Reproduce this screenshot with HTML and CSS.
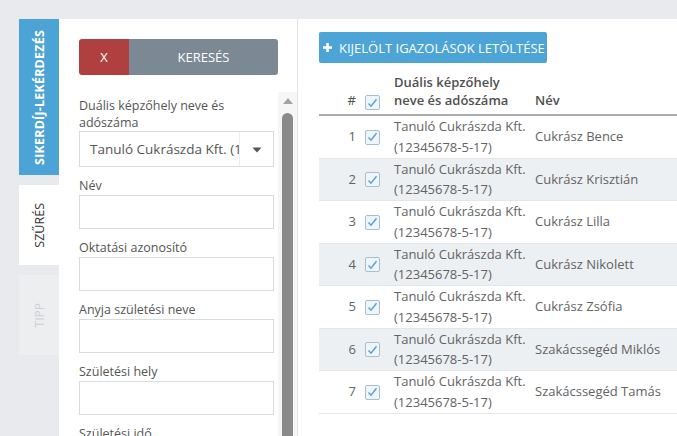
FILE: index.html
```html
<!DOCTYPE html>
<html lang="hu">
<head>
<meta charset="utf-8">
<title>Sikerdíj-lekérdezés</title>
<link rel="stylesheet" href="styles.css">
</head>
<body>
<div class="app">
  <nav class="tabs">
    <div class="tab tab-blue"><span>SIKERDÍJ-LEKÉRDEZÉS</span></div>
    <div class="tab tab-white"><span>SZŰRÉS</span></div>
    <div class="tab tab-gray"><span>TIPP</span></div>
  </nav>

  <aside class="filter">
    <div class="btn-group">
      <button class="btn-x">X</button>
      <button class="btn-search">KERESÉS</button>
    </div>
    <div class="scroll">
      <div class="scroll-content">
        <div class="field">
          <label class="label">Duális képzőhely neve és adószáma</label>
          <div class="select">
            <span class="select-text">Tanuló Cukrászda Kft. (12345678-5-17)</span>
            <span class="select-caret"><svg width="10" height="6" viewBox="0 0 10 6"><path d="M0.5 0.5H9.5L5 5.5Z" fill="#555"/></svg></span>
          </div>
        </div>
        <div class="field">
          <label class="label">Név</label>
          <div class="input"></div>
        </div>
        <div class="field">
          <label class="label">Oktatási azonosító</label>
          <div class="input"></div>
        </div>
        <div class="field">
          <label class="label">Anyja születési neve</label>
          <div class="input"></div>
        </div>
        <div class="field">
          <label class="label">Születési hely</label>
          <div class="input"></div>
        </div>
        <div class="field">
          <label class="label">Születési idő</label>
          <div class="input"></div>
        </div>
      </div>
      <div class="scrollbar">
        <div class="sb-arrow"></div>
        <div class="sb-thumb"></div>
      </div>
    </div>
  </aside>

  <main class="main">
    <button class="btn-download"><svg class="plus" width="9" height="9" viewBox="0 0 9 9"><path d="M3.2 0H5.8V3.2H9V5.8H5.8V9H3.2V5.8H0V3.2H3.2Z" fill="#fff"/></svg>KIJELÖLT IGAZOLÁSOK LETÖLTÉSE</button>
    <table class="grid">
      <thead>
        <tr>
          <th class="c-num">#</th>
          <th class="c-chk"><span class="chk"><svg width="11" height="10" viewBox="0 0 11 10"><path d="M1.5 5.5L4 8.2L9.5 1.2" fill="none" stroke="#5b9fd3" stroke-width="1.4"/></svg></span></th>
          <th class="c-comp">Duális képzőhely<br>neve és adószáma</th>
          <th class="c-name">Név</th>
          <th class="c-more"><span class="sort-dot"></span></th>
        </tr>
      </thead>
      <tbody>
        <tr><td class="c-num">1</td><td class="c-chk"><span class="chk"><svg width="11" height="10" viewBox="0 0 11 10"><path d="M1.5 5.5L4 8.2L9.5 1.2" fill="none" stroke="#5b9fd3" stroke-width="1.4"/></svg></span></td><td class="c-comp">Tanuló Cukrászda Kft.<br>(12345678-5-17)</td><td class="c-name">Cukrász Bence</td><td class="c-more"></td></tr>
        <tr><td class="c-num">2</td><td class="c-chk"><span class="chk"><svg width="11" height="10" viewBox="0 0 11 10"><path d="M1.5 5.5L4 8.2L9.5 1.2" fill="none" stroke="#5b9fd3" stroke-width="1.4"/></svg></span></td><td class="c-comp">Tanuló Cukrászda Kft.<br>(12345678-5-17)</td><td class="c-name">Cukrász Krisztián</td><td class="c-more"></td></tr>
        <tr><td class="c-num">3</td><td class="c-chk"><span class="chk"><svg width="11" height="10" viewBox="0 0 11 10"><path d="M1.5 5.5L4 8.2L9.5 1.2" fill="none" stroke="#5b9fd3" stroke-width="1.4"/></svg></span></td><td class="c-comp">Tanuló Cukrászda Kft.<br>(12345678-5-17)</td><td class="c-name">Cukrász Lilla</td><td class="c-more"></td></tr>
        <tr><td class="c-num">4</td><td class="c-chk"><span class="chk"><svg width="11" height="10" viewBox="0 0 11 10"><path d="M1.5 5.5L4 8.2L9.5 1.2" fill="none" stroke="#5b9fd3" stroke-width="1.4"/></svg></span></td><td class="c-comp">Tanuló Cukrászda Kft.<br>(12345678-5-17)</td><td class="c-name">Cukrász Nikolett</td><td class="c-more"></td></tr>
        <tr><td class="c-num">5</td><td class="c-chk"><span class="chk"><svg width="11" height="10" viewBox="0 0 11 10"><path d="M1.5 5.5L4 8.2L9.5 1.2" fill="none" stroke="#5b9fd3" stroke-width="1.4"/></svg></span></td><td class="c-comp">Tanuló Cukrászda Kft.<br>(12345678-5-17)</td><td class="c-name">Cukrász Zsófia</td><td class="c-more"></td></tr>
        <tr><td class="c-num">6</td><td class="c-chk"><span class="chk"><svg width="11" height="10" viewBox="0 0 11 10"><path d="M1.5 5.5L4 8.2L9.5 1.2" fill="none" stroke="#5b9fd3" stroke-width="1.4"/></svg></span></td><td class="c-comp">Tanuló Cukrászda Kft.<br>(12345678-5-17)</td><td class="c-name">Szakácssegéd Miklós</td><td class="c-more"></td></tr>
        <tr><td class="c-num">7</td><td class="c-chk"><span class="chk"><svg width="11" height="10" viewBox="0 0 11 10"><path d="M1.5 5.5L4 8.2L9.5 1.2" fill="none" stroke="#5b9fd3" stroke-width="1.4"/></svg></span></td><td class="c-comp">Tanuló Cukrászda Kft.<br>(12345678-5-17)</td><td class="c-name">Szakácssegéd Tamás</td><td class="c-more"></td></tr>
      </tbody>
    </table>
  </main>
</div>
</body>
</html>
```

FILE: styles.css
```css
* { box-sizing: border-box; }
html, body { margin: 0; padding: 0; }
body {
  background: #e8eaed;
  font-family: "Open Sans", "Noto Sans", sans-serif;
  font-size: 13px;
  color: #555;
  overflow: hidden;
}
.app {
  display: flex;
  height: 436px;
  padding: 19px 0 0 19px;
}

/* vertical tabs */
.tabs {
  width: 40px;
  display: flex;
  flex-direction: column;
  gap: 10px;
  flex: none;
}
.tab {
  display: flex;
  align-items: center;
  justify-content: center;
}
.tab span {
  writing-mode: vertical-rl;
  transform: rotate(180deg);
  font-size: 12px;
  white-space: nowrap;
}
.tab-blue {
  height: 156px;
  background: #4ca3d5;
  color: #fff;
}
.tab-blue span { font-weight: 700; font-size: 12.5px; letter-spacing: 0.2px; }
.tab-white {
  height: 80px;
  background: #fff;
  color: #333;
  margin-right: -1px;
  position: relative;
}
.tab-white span { font-size: 12.5px; }
.tab-gray {
  height: 80px;
  background: #eceef0;
  color: #cdd0d4;
}

/* filter panel */
.filter {
  width: 239px;
  flex: none;
  background: #fff;
  border-right: 1px solid #e2e4e6;
  padding: 20px 0 0 20px;
  display: flex;
  flex-direction: column;
  overflow: hidden;
}
.btn-group {
  display: flex;
  width: 199px;
  height: 36px;
  border-radius: 3px;
  overflow: hidden;
  flex: none;
}
.btn-group button {
  border: 0;
  margin: 0;
  font-family: inherit;
  font-size: 13px;
  color: #fff;
}
.btn-x { width: 50px; background: #b0403f; }
.btn-search { flex: 1; background: #7c8894; }

.scroll {
  margin-top: 17px;
  display: flex;
  gap: 4px;
  flex: 1;
  min-height: 0;
}
.scroll-content {
  width: 195px;
  padding-top: 5px;
}
.field { margin-bottom: 10px; }
.label {
  display: block;
  line-height: 17px;
  font-size: 12.5px;
  color: #555;
  margin-bottom: 1px;
}
.input, .select {
  height: 34px;
  border: 1px solid #d9dcdf;
  background: #fff;
}
.select {
  height: 36px;
  display: flex;
  align-items: center;
  margin-top: -1px;
}
.select-text {
  flex: 1;
  min-width: 0;
  overflow: hidden;
  white-space: nowrap;
  padding-left: 10px;
  font-size: 13.5px;
  color: #555;
}
.select-caret {
  width: 34px;
  height: 100%;
  border-left: 1px solid #eceef0;
  display: flex;
  align-items: center;
  justify-content: center;
  padding-top: 1px;
}

.scrollbar {
  width: 19px;
  background: #f6f6f6;
  display: flex;
  flex-direction: column;
  align-items: center;
  padding: 6px 0 0 0;
}
.sb-arrow {
  width: 0; height: 0;
  border-left: 5px solid transparent;
  border-right: 5px solid transparent;
  border-bottom: 6px solid #a3a3a3;
}
.sb-thumb {
  margin-top: 9px;
  width: 11px;
  flex: 1;
  background: #8a8a8a;
  border-radius: 6px 6px 0 0;
}

/* main */
.main {
  flex: 1;
  min-width: 0;
  background: #fff;
  padding: 13px 0 0 21px;
  overflow: hidden;
}
.btn-download {
  display: flex;
  align-items: center;
  height: 31px;
  width: 228px;
  padding: 0 0 0 4px;
  border: 0;
  border-radius: 2px;
  background: #4ca4d7;
  color: #fff;
  font-family: inherit;
  font-size: 13px;
  white-space: nowrap;
}
.btn-download .plus { margin-right: 7px; flex: none; }

.grid {
  margin-top: 5px;
  border-collapse: collapse;
  width: 380px;
  table-layout: fixed;
}
.grid th {
  font-weight: 600;
  color: #505050;
  text-align: left;
  vertical-align: bottom;
  line-height: 18px;
  padding: 5px 0 5px 0;
  border-bottom: 2px solid #a9acaf;
}
.grid td {
  line-height: 20.75px;
  padding: 0;
  color: #636363;
  vertical-align: middle;
  border-bottom: 1px solid #e4e6e8;
  white-space: nowrap;
}
.grid tbody tr:nth-child(even) td { background: #edf0f2; }
.c-num { width: 41px; text-align: right !important; padding-right: 4px !important; font-weight: 400 !important; }
.c-chk { width: 29px; padding-left: 5px !important; }
.c-comp { width: 141px; padding-left: 5px !important; }
.c-name { width: 140px; padding-left: 5px !important; }
.c-more { width: 29px; }
.grid th.c-chk { padding-bottom: 4px; }
.chk {
  display: flex;
  align-items: center;
  justify-content: center;
  width: 15px;
  height: 15px;
  border: 1px solid #a7bfd2;
  background: #eef5fb;
  border-radius: 2px;
}
.grid td .chk { margin-top: 1px; }
.sort-dot {
  display: inline-block;
  width: 4px;
  height: 4px;
  background: #f5b46b;
  margin-bottom: 6px;
  margin-left: 16px;
}
```
